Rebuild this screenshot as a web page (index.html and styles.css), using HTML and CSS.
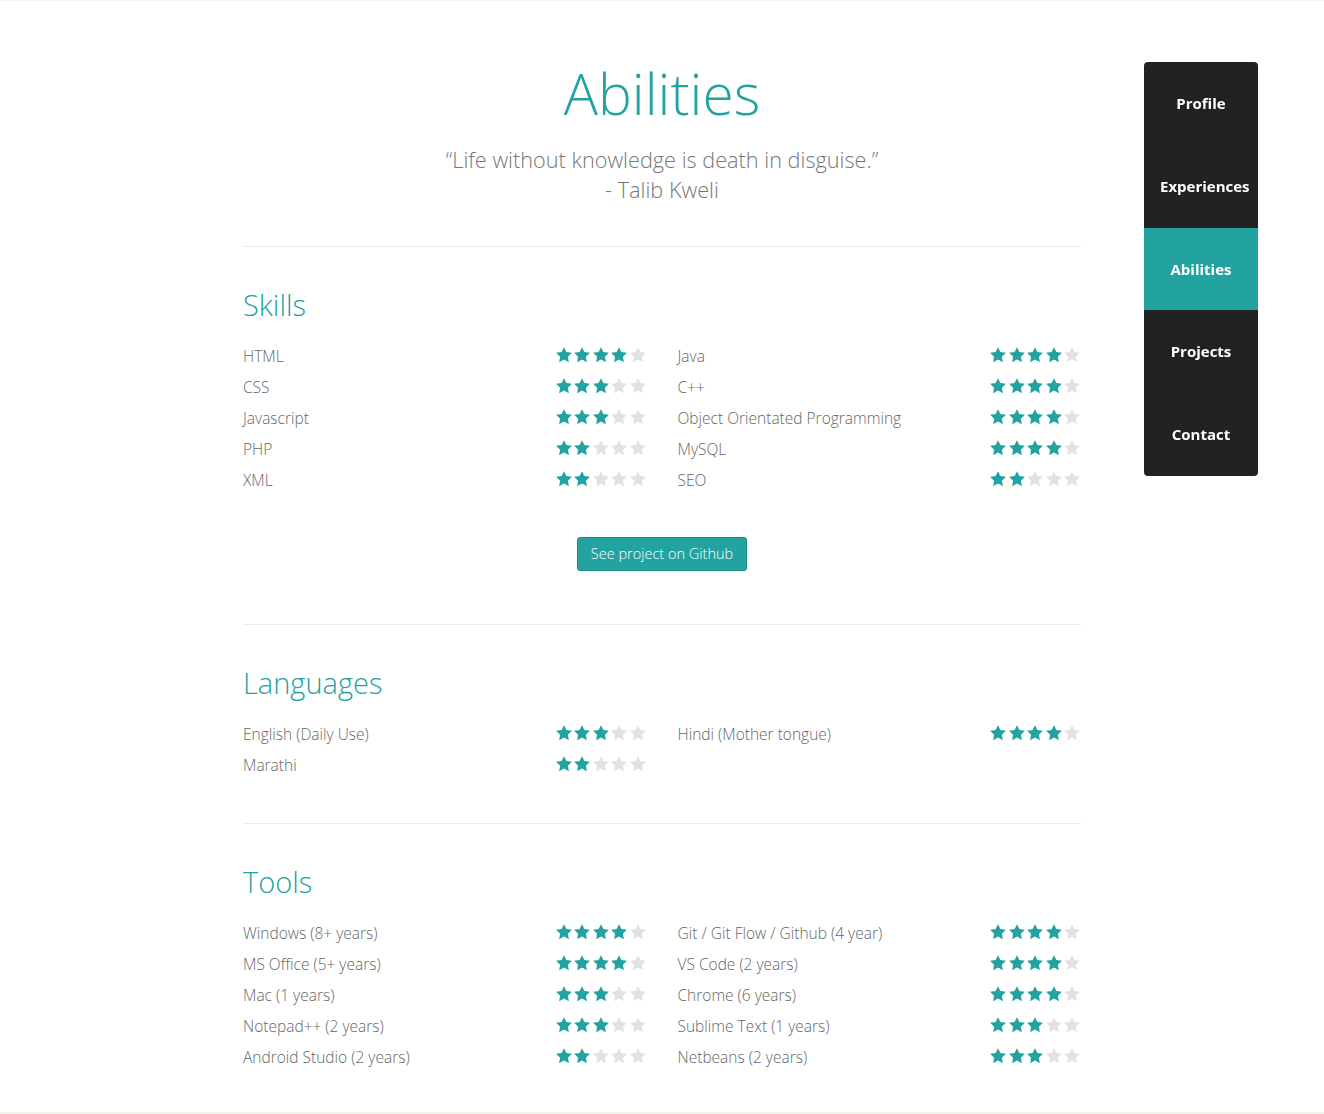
FILE: index.html
```html
<!DOCTYPE html>
<html lang="en">
<head>
<meta charset="utf-8">
<title>Abilities</title>
<link rel="stylesheet" href="styles.css">
</head>
<body>
<svg class="defs" width="0" height="0" aria-hidden="true">
  <symbol id="star" viewBox="0 0 24 24"><polygon points="12,1.5 15.2,8.1 22.5,9.1 17.2,14.2 18.5,21.5 12,18 5.5,21.5 6.8,14.2 1.5,9.1 8.8,8.1"/></symbol>
</svg>
<main class="page">
  <div class="container">
    <header class="intro">
      <h1 class="title">Abilities</h1>
      <p class="quote">“Life without knowledge is death in disguise.”<br>- Talib Kweli</p>
    </header>

    <section class="block block-skills">
      <h2 class="block-title">Skills</h2>
      <div class="grid" data-list="skills"></div>
      <div class="actions"><a class="btn" href="#">See project on Github</a></div>
    </section>

    <section class="block">
      <h2 class="block-title">Languages</h2>
      <div class="grid" data-list="languages"></div>
    </section>

    <section class="block">
      <h2 class="block-title">Tools</h2>
      <div class="grid" data-list="tools"></div>
    </section>
  </div>
</main>

<nav class="sidenav">
  <a class="nav-item" href="#">Profile</a>
  <a class="nav-item" href="#">Experiences</a>
  <a class="nav-item active" href="#">Abilities</a>
  <a class="nav-item" href="#">Projects</a>
  <a class="nav-item" href="#">Contact</a>
</nav>
<script src="app.js"></script>
</body>
</html>
```
FILE: styles.css
```css
html, body {
  margin: 0;
  padding: 0;
}
body {
  background: #f4f2e8;
  font-family: "Open Sans", "Liberation Sans", sans-serif;
  color: #666;
  padding: 1px 0 2px;
}
.defs { position: absolute; }
.page {
  background: #fff;
  min-height: 1111px;
  box-sizing: border-box;
  padding-top: 59px;
}
.container {
  width: 838px;
  margin: 0 auto;
}
.intro {
  text-align: center;
  padding-bottom: 41px;
  border-bottom: 1px solid #ececec;
}
.title {
  margin: 0;
  font-weight: 300;
  font-size: 57px;
  line-height: 66px;
  color: #22a39f;
}
.quote {
  margin: 19px 0 0;
  font-weight: 300;
  font-size: 21.7px;
  line-height: 30px;
  color: #777;
}
.block {
  padding: 41px 0 43px;
  border-bottom: 1px solid #ececec;
}
.block:last-child {
  border-bottom: 0;
  padding-bottom: 0;
}
.block-skills { padding-bottom: 53px; }
.block-title {
  margin: 0 0 19px;
  font-weight: 300;
  font-size: 29px;
  line-height: 33px;
  color: #22a39f;
}
.grid {
  display: grid;
  grid-template-columns: 1fr 1fr;
  column-gap: 31px;
}
.row {
  display: flex;
  align-items: center;
  justify-content: space-between;
  height: 31px;
  font-weight: 300;
  font-size: 15.5px;
  color: #666;
}
.stars {
  display: flex;
  gap: 0.5px;
  margin-top: -2px;
}
.star {
  width: 18px;
  height: 18px;
  fill: #e2e2e2;
}
.star.on { fill: #22a39f; }
.actions {
  display: flex;
  justify-content: center;
  margin-top: 42px;
}
.btn {
  display: inline-block;
  box-sizing: border-box;
  height: 34px;
  padding: 0 13px;
  line-height: 32px;
  font-size: 14.5px;
  font-weight: 300;
  color: #fff;
  text-decoration: none;
  background: #22a39f;
  border: 1px solid #1b8c88;
  border-radius: 3px;
}
.sidenav {
  position: fixed;
  top: 62px;
  right: 66px;
  width: 114px;
  background: #222;
  border-radius: 4px;
  overflow: hidden;
  display: flex;
  flex-direction: column;
}
.nav-item {
  display: block;
  box-sizing: border-box;
  height: 82.8px;
  line-height: 82.8px;
  padding: 0 16px;
  text-align: center;
  white-space: nowrap;
  color: #fff;
  text-decoration: none;
  font-weight: 700;
  font-size: 15px;
}
.nav-item.active { background: #22a39f; }
```
FILE: app.js
```js
const data = {
  skills: [
    ["HTML", 4], ["Java", 4],
    ["CSS", 3], ["C++", 4],
    ["Javascript", 3], ["Object Orientated Programming", 4],
    ["PHP", 2], ["MySQL", 4],
    ["XML", 2], ["SEO", 2]
  ],
  languages: [
    ["English (Daily Use)", 3], ["Hindi (Mother tongue)", 4],
    ["Marathi", 2]
  ],
  tools: [
    ["Windows (8+ years)", 4], ["Git / Git Flow / Github (4 year)", 4],
    ["MS Office (5+ years)", 4], ["VS Code (2 years)", 4],
    ["Mac (1 years)", 3], ["Chrome (6 years)", 4],
    ["Notepad++ (2 years)", 3], ["Sublime Text (1 years)", 3],
    ["Android Studio (2 years)", 2], ["Netbeans (2 years)", 3]
  ]
};
document.querySelectorAll("[data-list]").forEach(function (grid) {
  data[grid.dataset.list].forEach(function (item) {
    const row = document.createElement("div");
    row.className = "row";
    const label = document.createElement("span");
    label.className = "label";
    label.textContent = item[0];
    const stars = document.createElement("span");
    stars.className = "stars";
    let html = "";
    for (let i = 0; i < 5; i++) {
      html += '<svg class="star' + (i < item[1] ? " on" : "") + '"><use href="#star"/></svg>';
    }
    stars.innerHTML = html;
    row.appendChild(label);
    row.appendChild(stars);
    grid.appendChild(row);
  });
});
```
